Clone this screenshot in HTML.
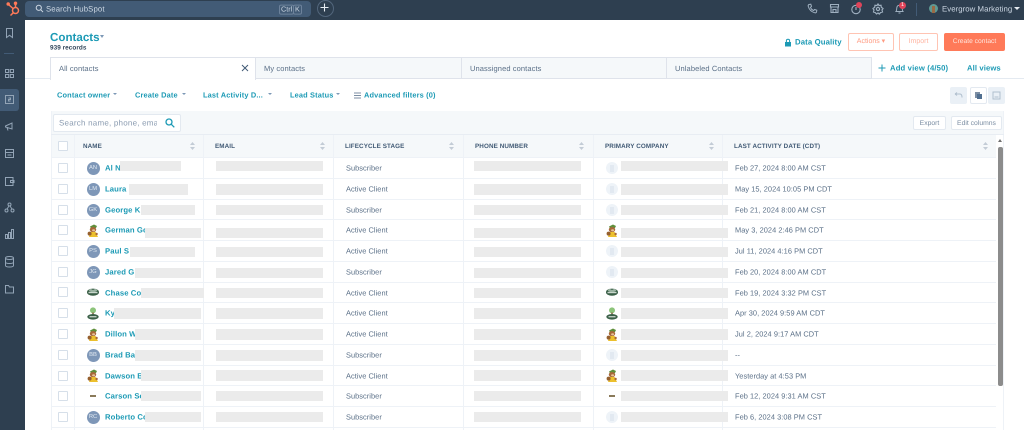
<!DOCTYPE html>
<html><head><meta charset="utf-8"><title>Contacts</title>
<style>
html,body{margin:0;padding:0;width:1024px;height:430px;overflow:hidden;background:#fff;font-family:"Liberation Sans",sans-serif;text-rendering:geometricPrecision}
#p{position:relative;width:1024px;height:430px;overflow:hidden;filter:blur(.3px)}
#p div,#p span.a,#p svg{position:absolute}
.t{white-space:nowrap;font-size:7.4px;line-height:10px;color:#5a6f87;letter-spacing:.05px;transform:translateY(.6px)}
.l{white-space:nowrap;font-size:7.7px;line-height:10px;color:#1c9ab5;font-weight:bold;letter-spacing:.1px;transform:translateY(.6px)}
.h{white-space:nowrap;font-size:6.3px;line-height:10px;color:#425b76;font-weight:bold;letter-spacing:.1px;top:142px}
.g{background:#ebebeb}
.ln{left:51px;width:945px;height:1px;background:#eef2f7}
.cb{left:58px;width:8px;height:8px;border:1px solid #d6dfe9;background:#fff;border-radius:1px}
.av{left:86.5px;width:13px;height:13px;border-radius:50%;background:#7e97b8;color:#e0e8f0;font-size:5.8px;line-height:13px;text-align:center}
.co{left:606px;width:12px;height:12px;border-radius:50%;background:#eef3f8}
.co::after{content:"";position:absolute;left:4px;top:3px;width:4px;height:7px;background:#e2e9f1}
.tab{top:57px;height:22px;background:#f5f8fa;border:1px solid #dfe3eb;box-sizing:border-box;font-size:7.5px;line-height:21px;color:#5a6f87;padding-left:8px;letter-spacing:.1px}
.btn{border:1px solid #ffc4b3;border-radius:2px;box-sizing:border-box;background:#fff;color:#ff9a80;font-size:7px;text-align:center;line-height:16px}
.w{border:1px solid #e3e9f0;border-radius:2px;box-sizing:border-box;background:#fff;color:#7c8ea3;font-size:6.8px;text-align:center;line-height:13px}
</style></head><body><div id="p">
<svg width="0" height="0" style="left:0;top:0"><defs>
<g id="m"><path d="M3 2.5 L7 .5 L10 2 L9 4 L4 4.5Z" fill="#5f8f3c"/><ellipse cx="6" cy="5.6" rx="3.2" ry="2.6" fill="#a8683a"/><ellipse cx="6.6" cy="6.3" rx="1.5" ry="1.1" fill="#e6c298"/><path d="M3.8 8 H8.6 L11 13 H2Z" fill="#ecc02e"/><circle cx="2.6" cy="9.6" r="2" fill="#96602e"/><circle cx="9.6" cy="10" r="1.2" fill="#a8683a"/></g>
<g id="f"><ellipse cx="6" cy="6.2" rx="6" ry="3.6" fill="#3a5f47"/><path d="M1.5 5 L3.5 2.8 L6 4 L8.5 2.8 L10.5 5 L8 6 H4Z" fill="#9bb3a2"/><rect x="1.5" y="6" width="9" height="1.2" fill="#c9d6cc"/></g>
<g id="k"><circle cx="6" cy="3.4" r="3" fill="#8cc47a"/><rect x="5.2" y="5.5" width="1.6" height="3" fill="#8a6a4a"/><ellipse cx="6" cy="9.8" rx="5.7" ry="2.8" fill="#3a5f47"/><rect x="2.5" y="9.2" width="7" height="1.1" fill="#dfe8df"/></g>
</defs></svg>

<!-- top bar -->
<div style="left:0;top:0;width:1024px;height:20px;background:#2e3f50"></div>
<div style="left:0;top:0;width:25px;height:430px;background:#2e3f50"></div>
<div style="left:25px;top:20px;width:999px;height:410px;background:#fff;border-top-left-radius:5px"></div>
<svg style="left:6px;top:1px" width="15" height="16" viewBox="0 0 15 16" fill="none" stroke="#ff7a59" stroke-width="1.5"><circle cx="9.5" cy="9.5" r="3"/><path d="M9.5 6.5V3M2.5 3.5 L7 7.5M7.2 11.8 L4.5 14.5"/><circle cx="2.2" cy="3" r="1" fill="#ff7a59"/><circle cx="9.5" cy="2.2" r="1" fill="#ff7a59"/></svg>
<div style="left:25px;top:1px;width:286px;height:16px;background:#425b76;border-radius:4px"></div>
<svg style="left:35px;top:4px" width="9" height="9" viewBox="0 0 9 9" fill="none" stroke="#cbd6e2" stroke-width="1"><circle cx="3.8" cy="3.8" r="2.6"/><path d="M5.8 5.8 L8 8"/></svg>
<div class="t" style="left:46px;top:4px;color:#cbd6e2;font-size:7.8px;letter-spacing:.1px">Search HubSpot</div>
<div class="t" style="left:279px;top:4px;color:#cbd6e2;font-size:7.2px;border:1px solid #6d829b;border-radius:2px;line-height:8px;padding:0 1px">Ctrl</div>
<div class="t" style="left:293px;top:4px;color:#cbd6e2;font-size:7.2px;border:1px solid #6d829b;border-radius:2px;line-height:8px;padding:0 1px">K</div>
<div style="left:317px;top:0;width:15px;height:15px;border:1px solid #52667c;border-radius:50%"></div>
<svg style="left:320px;top:3px" width="9" height="9" viewBox="0 0 9 9" stroke="#e6ecf2" stroke-width="1.1"><path d="M4.5 .5V8.5M.5 4.5H8.5"/></svg>

<!-- top right icons -->
<svg style="left:807px;top:3px" width="11" height="11" viewBox="0 0 11 11" fill="none" stroke="#9fb0c0" stroke-width="1"><path d="M2 1.5 L3.8 1.2 L4.5 3.4 L3.5 4.3 C4 5.8 5.2 7 6.7 7.5 L7.6 6.5 L9.8 7.2 L9.5 9 C9.3 9.8 8.5 10 7.5 9.7 C4.5 8.8 2.2 6.5 1.3 3.5 C1 2.5 1.2 1.8 2 1.5Z"/></svg>
<svg style="left:829px;top:3px" width="11" height="11" viewBox="0 0 11 11" fill="none" stroke="#9fb0c0" stroke-width="1.1"><path d="M1.5 1.5H9.5V4H1.5ZM2 4V9.5H9V4M4 9.5V6.5H7V9.5"/></svg>
<svg style="left:850px;top:3px" width="12" height="12" viewBox="0 0 12 12" fill="none" stroke="#9fb0c0" stroke-width="1.1"><circle cx="6" cy="6.5" r="4.2"/><path d="M6 4V7"/></svg>
<div style="left:856px;top:2px;width:6px;height:6px;border-radius:50%;background:#e0445a"></div>
<svg style="left:872px;top:3px" width="12" height="12" viewBox="0 0 12 12" fill="none" stroke="#9fb0c0" stroke-width="1.2"><path d="M6 1 L7 2.5 L9 2.3 L9.3 4.3 L11 5.5 L10 7 L10.5 9 L8.5 9.6 L7.3 11 L6 10 L4.5 11 L3.3 9.6 L1.5 9 L2 7 L1 5.5 L2.7 4.3 L3 2.3 L5 2.5Z"/><circle cx="6" cy="6" r="1.6"/></svg>
<svg style="left:894px;top:3px" width="11" height="12" viewBox="0 0 11 12" fill="none" stroke="#9fb0c0" stroke-width="1"><path d="M2 8.5 C2.8 7.5 2.6 6 2.8 4.8 C3 3 4 2.2 5.5 2.2 C7 2.2 8 3 8.2 4.8 C8.4 6 8.2 7.5 9 8.5ZM4.5 10 H6.5"/></svg>
<div style="left:899px;top:2px;width:7px;height:7px;border-radius:50%;background:#e0445a;color:#fff;font-size:5.5px;line-height:7px;text-align:center">1</div>
<div style="left:916px;top:3px;width:1px;height:13px;background:#425b76"></div>
<div style="left:929px;top:4px;width:9px;height:9px;border-radius:50%;background:#5f9a94;overflow:hidden"></div>
<div style="left:932px;top:6px;width:3px;height:7px;background:#9a6a45"></div>
<div class="t" style="left:942px;top:4px;color:#cbd6e2;font-size:7.8px;letter-spacing:.05px">Evergrow Marketing</div>
<div style="left:1014px;top:7px;width:0;height:0;border:3px solid transparent;border-top:3.5px solid #e6ecf2"></div>

<!-- sidebar -->
<div style="left:0;top:89px;width:19px;height:22px;background:#425b76;border-radius:0 3px 3px 0"></div>
<div style="left:4px;top:53px;width:10px;height:1px;background:#425b76"></div>
<svg style="left:4px;top:27px" width="11" height="294" viewBox="0 0 11 294" fill="none" stroke="#93a4b6" stroke-width="1">
<path d="M2.5 1.5H8.5V10.5L5.5 8.3L2.5 10.5Z"/>
<rect x="1.5" y="42.5" width="3.2" height="3"/><rect x="6.3" y="42.5" width="3.2" height="3"/><rect x="1.5" y="47.5" width="3.2" height="3"/><rect x="6.3" y="47.5" width="3.2" height="3"/>
<rect x="1.5" y="68.5" width="8" height="8"/><path d="M4.5 71H6.5V72.5H4.5V74H6.5"/>
<path d="M1.5 99L8 96V102L1.5 100ZM3 100.5L4 103.5"/>
<rect x="1.5" y="122.5" width="8" height="8"/><path d="M1.5 125.5H9.5M3.5 128H7.5"/>
<path d="M1.5 150.5H9V158.5H1.5ZM6.5 153.5H10V155.5H6.5Z"/>
<circle cx="5.5" cy="177.5" r="1.5"/><circle cx="2.5" cy="183.5" r="1.5"/><circle cx="8.5" cy="183.5" r="1.5"/><path d="M5 179L3 182M6 179L8 182"/>
<rect x="1.5" y="207.5" width="2" height="4"/><rect x="4.5" y="205.5" width="2" height="6"/><rect x="7.5" y="202.5" width="2" height="9"/>
<ellipse cx="5.5" cy="231" rx="4" ry="1.5"/><path d="M1.5 231V238.5C1.5 240.5 9.5 240.5 9.5 238.5V231M1.5 235C1.5 237 9.5 237 9.5 235"/>
<path d="M1.5 258.5H4.5L5.5 260H9.5V266H1.5Z"/>
</svg>

<!-- heading -->
<div style="left:50px;top:29.5px;font-size:11.6px;line-height:16px;font-weight:bold;color:#1c9ab5;white-space:nowrap">Contacts</div>
<div style="left:100px;top:35px;width:0;height:0;border:2.5px solid transparent;border-top:3px solid #7c98b6"></div>
<div class="t" style="left:50px;top:43px;font-size:6.4px;font-weight:bold;color:#33475b">939 records</div>

<svg style="left:784px;top:38px" width="8" height="9" viewBox="0 0 8 9"><path d="M1 4H7V8.5H1Z" fill="#1c9ab5"/><path d="M2.4 4V2.6C2.4 .8 5.6 .8 5.6 2.6V4" fill="none" stroke="#1c9ab5" stroke-width="1"/></svg>
<div class="l" style="left:795px;top:37px;font-size:7.8px;letter-spacing:.1px">Data Quality</div>
<div class="btn" style="left:848px;top:33px;width:46px;height:18px">Actions ▾</div>
<div class="btn" style="left:899px;top:33px;width:39px;height:18px;color:#ffb5a2">Import</div>
<div class="btn" style="left:944px;top:33px;width:61px;height:18px;background:#ff7a59;border-color:#ff7a59;color:#ffe4dc;font-size:6.7px">Create contact</div>

<!-- tabs -->
<div style="left:25px;top:78px;width:999px;height:1px;background:#e4eaf1"></div>
<div class="tab" style="left:255px;width:207px">My contacts</div>
<div class="tab" style="left:461px;width:206px">Unassigned contacts</div>
<div class="tab" style="left:666px;width:206px">Unlabeled Contacts</div>
<div class="tab" style="left:50px;width:206px;height:23px;background:#fff;border-bottom:0">All contacts</div>
<svg style="left:241px;top:64px" width="8" height="8" viewBox="0 0 8 8" stroke="#425b76" stroke-width="1"><path d="M1 1L7 7M7 1L1 7"/></svg>
<svg style="left:878px;top:64px" width="8" height="8" viewBox="0 0 8 8" stroke="#1c9ab5" stroke-width="1"><path d="M4 .5V7.5M.5 4H7.5"/></svg>
<div class="l" style="left:890px;top:63px;letter-spacing:.15px">Add view (4/50)</div>
<div class="l" style="left:967px;top:63px;letter-spacing:.1px">All views</div>

<!-- filters -->
<div class="l" style="left:57px;top:90px;font-size:7.4px;letter-spacing:.15px">Contact owner</div>
<div style="left:113px;top:93px;border:2px solid transparent;border-top:2.5px solid #7c98b6"></div>
<div class="l" style="left:135px;top:90px;font-size:7.4px;letter-spacing:.15px">Create Date</div>
<div style="left:182px;top:93px;border:2px solid transparent;border-top:2.5px solid #7c98b6"></div>
<div class="l" style="left:203px;top:90px;font-size:7.4px;letter-spacing:.15px">Last Activity D...</div>
<div style="left:268px;top:93px;border:2px solid transparent;border-top:2.5px solid #7c98b6"></div>
<div class="l" style="left:290px;top:90px;font-size:7.4px;letter-spacing:.15px">Lead Status</div>
<div style="left:336px;top:93px;border:2px solid transparent;border-top:2.5px solid #7c98b6"></div>
<svg style="left:354px;top:92px" width="7" height="7" viewBox="0 0 7 7" stroke="#7c8ea3" stroke-width=".9"><path d="M0 1H7M0 3.5H7M0 6H7"/></svg>
<div class="l" style="left:364px;top:90px;font-size:7.4px;letter-spacing:.15px">Advanced filters (0)</div>

<div style="left:950px;top:87px;width:17px;height:17px;background:#eaf0f6;border-radius:2px"></div>
<svg style="left:954px;top:92px" width="9" height="7" viewBox="0 0 9 7" fill="none" stroke="#b0bfce" stroke-width="1"><path d="M1 2H6C7.5 2 8 3.5 8 5.5M1 2L3 .5M1 2L3 3.5"/></svg>
<div style="left:970px;top:87px;width:17px;height:17px;background:#fff;border:1px solid #e3e9f0;box-sizing:border-box;border-radius:2px"></div>
<div style="left:975px;top:92px;width:5px;height:6px;background:#7c8ea3"></div>
<div style="left:977px;top:94px;width:5px;height:5px;background:#516f90"></div>
<div style="left:988px;top:87px;width:17px;height:17px;background:#eaf0f6;border-radius:2px"></div>
<svg style="left:992px;top:91px" width="9" height="9" viewBox="0 0 9 9" fill="none" stroke="#b0bfce" stroke-width="1"><path d="M1 1H8V8H1ZM2.5 6H6.5"/></svg>

<!-- toolbar -->
<div style="left:51px;top:111px;width:953px;height:24px;background:#f5f8fa"></div>
<div style="left:53px;top:114px;width:128px;height:18px;background:#fff;border:1px solid #e3e9f0;box-sizing:border-box;border-radius:2px"></div>
<div class="t" style="left:59px;top:118px;width:98px;overflow:hidden;font-size:8px;color:#8a9bb0;letter-spacing:.22px">Search name, phone, email</div>
<svg style="left:165px;top:118px" width="10" height="10" viewBox="0 0 10 10" fill="none" stroke="#1c9ab5" stroke-width="1.3"><circle cx="4" cy="4" r="3"/><path d="M6.3 6.3L9.3 9.3"/></svg>
<div class="w" style="left:913px;top:116px;width:33px;height:14px">Export</div>
<div class="w" style="left:951px;top:116px;width:51px;height:14px">Edit columns</div>

<!-- table -->
<div style="left:51px;top:135px;width:945px;height:22px;background:#f5f8fa"></div>
<div style="left:51px;top:111px;width:1px;height:319px;background:#eef2f7"></div>
<div style="left:1003px;top:111px;width:1px;height:319px;background:#eef2f7"></div>
<div style="left:51px;top:134px;width:953px;height:1px;background:#e8edf3"></div>
<div style="left:74px;top:135px;width:1px;height:295px;background:#eef2f7"></div>
<div style="left:203px;top:135px;width:1px;height:295px;background:#eef2f7"></div>
<div style="left:333px;top:135px;width:1px;height:295px;background:#eef2f7"></div>
<div style="left:463px;top:135px;width:1px;height:295px;background:#eef2f7"></div>
<div style="left:593px;top:135px;width:1px;height:295px;background:#eef2f7"></div>
<div style="left:722px;top:135px;width:1px;height:295px;background:#eef2f7"></div>
<div class="h" style="left:83px">NAME</div>
<div class="h" style="left:215px">EMAIL</div>
<div class="h" style="left:345px">LIFECYCLE STAGE</div>
<div class="h" style="left:475px">PHONE NUMBER</div>
<div class="h" style="left:605px">PRIMARY COMPANY</div>
<div class="h" style="left:734px">LAST ACTIVITY DATE (CDT)</div>
<svg style="left:190px;top:142px" width="5" height="8" viewBox="0 0 5 8" fill="#c3ccd6"><path d="M2.5 0L5 3H0ZM2.5 8L0 5H5Z"/></svg>
<svg style="left:320px;top:142px" width="5" height="8" viewBox="0 0 5 8" fill="#c3ccd6"><path d="M2.5 0L5 3H0ZM2.5 8L0 5H5Z"/></svg>
<svg style="left:449px;top:142px" width="5" height="8" viewBox="0 0 5 8" fill="#c3ccd6"><path d="M2.5 0L5 3H0ZM2.5 8L0 5H5Z"/></svg>
<svg style="left:579px;top:142px" width="5" height="8" viewBox="0 0 5 8" fill="#c3ccd6"><path d="M2.5 0L5 3H0ZM2.5 8L0 5H5Z"/></svg>
<svg style="left:709px;top:142px" width="5" height="8" viewBox="0 0 5 8" fill="#c3ccd6"><path d="M2.5 0L5 3H0ZM2.5 8L0 5H5Z"/></svg>
<svg style="left:983px;top:142px" width="5" height="8" viewBox="0 0 5 8" fill="#c3ccd6"><path d="M2.5 0L5 3H0ZM2.5 8L0 5H5Z"/></svg>
<div class="cb" style="top:141px"></div>

<!-- row lines -->
<div class="ln" style="top:157px"></div><div class="ln" style="top:178px"></div><div class="ln" style="top:199px"></div><div class="ln" style="top:219px"></div><div class="ln" style="top:240px"></div><div class="ln" style="top:261px"></div><div class="ln" style="top:282px"></div><div class="ln" style="top:302px"></div><div class="ln" style="top:323px"></div><div class="ln" style="top:344px"></div><div class="ln" style="top:365px"></div><div class="ln" style="top:385px"></div><div class="ln" style="top:406px"></div><div class="ln" style="top:427px"></div>

<!-- row 1 -->
<div class="cb" style="top:163px"></div><div class="av" style="top:162px">AN</div><div class="l" style="left:105px;top:163px">Al N</div><div class="g" style="left:120px;top:161px;width:61px;height:10px"></div><div class="g" style="left:216px;top:161px;width:107px;height:10px"></div><div class="t" style="left:346px;top:163px">Subscriber</div><div class="g" style="left:474px;top:161px;width:107px;height:10px"></div><div class="co" style="top:162px"></div><div class="g" style="left:621px;top:161px;width:107px;height:10px"></div><div class="t" style="left:735px;top:163px">Feb 27, 2024 8:00 AM CST</div>
<!-- row 2 -->
<div class="cb" style="top:184px"></div><div class="av" style="top:183px">LM</div><div class="l" style="left:105px;top:184px">Laura</div><div class="g" style="left:129px;top:184px;width:59px;height:11px"></div><div class="g" style="left:216px;top:184px;width:107px;height:11px"></div><div class="t" style="left:346px;top:184px">Active Client</div><div class="g" style="left:474px;top:184px;width:107px;height:11px"></div><div class="co" style="top:183px"></div><div class="g" style="left:621px;top:184px;width:107px;height:11px"></div><div class="t" style="left:735px;top:184px">May 15, 2024 10:05 PM CDT</div>
<!-- row 3 -->
<div class="cb" style="top:205px"></div><div class="av" style="top:204px">GK</div><div class="l" style="left:105px;top:205px">George K</div><div class="g" style="left:141px;top:205px;width:54px;height:10px"></div><div class="g" style="left:216px;top:205px;width:107px;height:10px"></div><div class="t" style="left:346px;top:205px">Subscriber</div><div class="g" style="left:474px;top:205px;width:107px;height:10px"></div><div class="co" style="top:204px"></div><div class="g" style="left:621px;top:205px;width:107px;height:10px"></div><div class="t" style="left:735px;top:205px">Feb 21, 2024 8:00 AM CST</div>
<!-- row 4 -->
<div class="cb" style="top:225px"></div><svg style="left:87px;top:224px" width="12" height="14" viewBox="0 0 12 14"><use href="#m"/></svg><div class="l" style="left:105px;top:225px">German Gc</div><div class="g" style="left:145px;top:228px;width:56px;height:10px"></div><div class="g" style="left:216px;top:228px;width:107px;height:10px"></div><div class="t" style="left:346px;top:225px">Active Client</div><div class="g" style="left:474px;top:228px;width:107px;height:10px"></div><svg style="left:606px;top:224px" width="12" height="14" viewBox="0 0 12 14"><use href="#m"/></svg><div class="g" style="left:621px;top:228px;width:107px;height:10px"></div><div class="t" style="left:735px;top:225px">May 3, 2024 2:46 PM CDT</div>
<!-- row 5 -->
<div class="cb" style="top:246px"></div><div class="av" style="top:245px">PS</div><div class="l" style="left:105px;top:246px">Paul S</div><div class="g" style="left:130px;top:247px;width:65px;height:10px"></div><div class="g" style="left:216px;top:247px;width:107px;height:10px"></div><div class="t" style="left:346px;top:246px">Active Client</div><div class="g" style="left:474px;top:247px;width:107px;height:10px"></div><div class="co" style="top:245px"></div><div class="g" style="left:621px;top:247px;width:107px;height:10px"></div><div class="t" style="left:735px;top:246px">Jul 11, 2024 4:16 PM CDT</div>
<!-- row 6 -->
<div class="cb" style="top:267px"></div><div class="av" style="top:266px">JG</div><div class="l" style="left:105px;top:267px">Jared G</div><div class="g" style="left:135px;top:268px;width:66px;height:10px"></div><div class="g" style="left:216px;top:268px;width:107px;height:10px"></div><div class="t" style="left:346px;top:267px">Subscriber</div><div class="g" style="left:474px;top:268px;width:107px;height:10px"></div><div class="co" style="top:266px"></div><div class="g" style="left:621px;top:268px;width:107px;height:10px"></div><div class="t" style="left:735px;top:267px">Feb 20, 2024 8:00 AM CDT</div>
<!-- row 7 -->
<div class="cb" style="top:287px"></div><svg style="left:87px;top:286px" width="12" height="12" viewBox="0 0 12 12"><use href="#f"/></svg><div class="l" style="left:105px;top:288px">Chase Coo</div><div class="g" style="left:141px;top:288px;width:63px;height:10px"></div><div class="g" style="left:216px;top:288px;width:107px;height:10px"></div><div class="t" style="left:346px;top:288px">Active Client</div><div class="g" style="left:474px;top:288px;width:107px;height:10px"></div><svg style="left:606px;top:286px" width="12" height="12" viewBox="0 0 12 12"><use href="#f"/></svg><div class="g" style="left:621px;top:288px;width:107px;height:10px"></div><div class="t" style="left:735px;top:288px">Feb 19, 2024 3:32 PM CST</div>
<!-- row 8 -->
<div class="cb" style="top:308px"></div><svg style="left:87px;top:307px" width="12" height="13" viewBox="0 0 12 13"><use href="#k"/></svg><div class="l" style="left:105px;top:308px">Ky</div><div class="g" style="left:114px;top:308px;width:87px;height:11px"></div><div class="g" style="left:216px;top:308px;width:107px;height:11px"></div><div class="t" style="left:346px;top:308px">Active Client</div><div class="g" style="left:474px;top:308px;width:107px;height:11px"></div><svg style="left:606px;top:307px" width="12" height="13" viewBox="0 0 12 13"><use href="#k"/></svg><div class="g" style="left:621px;top:308px;width:107px;height:11px"></div><div class="t" style="left:735px;top:308px">Apr 30, 2024 9:59 AM CDT</div>
<!-- row 9 -->
<div class="cb" style="top:329px"></div><svg style="left:87px;top:328px" width="12" height="14" viewBox="0 0 12 14"><use href="#m"/></svg><div class="l" style="left:105px;top:329px">Dillon W</div><div class="g" style="left:135px;top:329px;width:66px;height:11px"></div><div class="g" style="left:216px;top:329px;width:107px;height:11px"></div><div class="t" style="left:346px;top:329px">Active Client</div><div class="g" style="left:474px;top:329px;width:107px;height:11px"></div><svg style="left:606px;top:328px" width="12" height="14" viewBox="0 0 12 14"><use href="#m"/></svg><div class="g" style="left:621px;top:329px;width:107px;height:11px"></div><div class="t" style="left:735px;top:329px">Jul 2, 2024 9:17 AM CDT</div>
<!-- row 10 -->
<div class="cb" style="top:350px"></div><div class="av" style="top:349px">BB</div><div class="l" style="left:105px;top:350px">Brad Ba</div><div class="g" style="left:135px;top:350px;width:66px;height:11px"></div><div class="g" style="left:216px;top:350px;width:107px;height:11px"></div><div class="t" style="left:346px;top:350px">Subscriber</div><div class="g" style="left:474px;top:350px;width:107px;height:11px"></div><div class="co" style="top:349px"></div><div class="g" style="left:621px;top:350px;width:107px;height:11px"></div><div class="t" style="left:735px;top:350px">--</div>
<!-- row 11 -->
<div class="cb" style="top:371px"></div><svg style="left:87px;top:369px" width="12" height="14" viewBox="0 0 12 14"><use href="#m"/></svg><div class="l" style="left:105px;top:371px">Dawson B</div><div class="g" style="left:141px;top:370px;width:60px;height:11px"></div><div class="g" style="left:216px;top:370px;width:107px;height:11px"></div><div class="t" style="left:346px;top:371px">Active Client</div><div class="g" style="left:474px;top:370px;width:107px;height:11px"></div><svg style="left:606px;top:369px" width="12" height="14" viewBox="0 0 12 14"><use href="#m"/></svg><div class="g" style="left:621px;top:370px;width:107px;height:11px"></div><div class="t" style="left:735px;top:371px">Yesterday at 4:53 PM</div>
<!-- row 12 -->
<div class="cb" style="top:391px"></div><div style="left:90px;top:395px;width:6px;height:2px;background:#8a7a5a"></div><div class="l" style="left:105px;top:391px">Carson Sc</div><div class="g" style="left:141px;top:391px;width:60px;height:10px"></div><div class="g" style="left:216px;top:391px;width:107px;height:10px"></div><div class="t" style="left:346px;top:391px">Subscriber</div><div class="g" style="left:474px;top:391px;width:107px;height:10px"></div><div style="left:609px;top:395px;width:6px;height:2px;background:#8a7a5a"></div><div class="g" style="left:621px;top:391px;width:107px;height:10px"></div><div class="t" style="left:735px;top:391px">Feb 12, 2024 9:31 AM CST</div>
<!-- row 13 -->
<div class="cb" style="top:412px"></div><div class="av" style="top:411px">RC</div><div class="l" style="left:105px;top:412px">Roberto Cc</div><div class="g" style="left:145px;top:412px;width:56px;height:10px"></div><div class="g" style="left:216px;top:412px;width:107px;height:10px"></div><div class="t" style="left:346px;top:412px">Subscriber</div><div class="g" style="left:474px;top:412px;width:107px;height:10px"></div><div class="co" style="top:411px"></div><div class="g" style="left:621px;top:412px;width:107px;height:10px"></div><div class="t" style="left:735px;top:412px">Feb 6, 2024 3:08 PM CST</div>

<!-- scrollbar -->
<div style="left:997px;top:135px;width:6px;height:295px;background:#fff"></div>
<div style="left:998px;top:137px;border:2.5px solid transparent;border-bottom:3px solid #6f6f6f"></div>
<div style="left:998px;top:147px;width:5px;height:239px;background:#8c8c8c;border-radius:2px"></div>
</div></body></html>
